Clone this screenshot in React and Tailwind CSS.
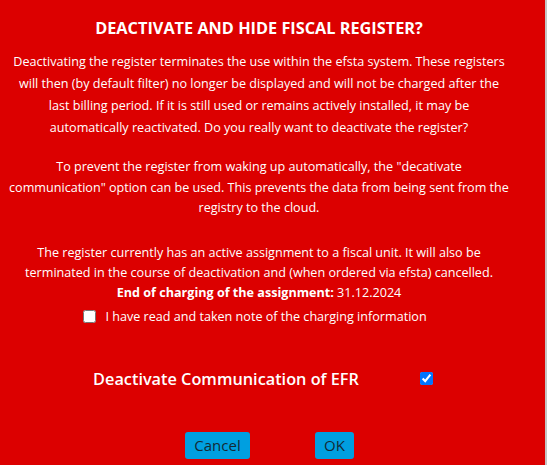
import { useState } from 'react';

const DeactivateDialog = () => {
  const [noted, setNoted] = useState(false);
  const [stopComm, setStopComm] = useState(true);

  return (
    <div className="flex h-[465px] w-[547px] overflow-hidden font-['Open_Sans',sans-serif]">
      <div className="flex-1 bg-[#dc0000] text-white">
        <div className="w-[518px] pt-[16px] text-center">
          <h2 className="text-[16.3px] font-bold leading-[24px]">DEACTIVATE AND HIDE FISCAL REGISTER?</h2>

          <p className="mt-[11px] whitespace-nowrap text-[12.6px] leading-[22px]">
            Deactivating the register terminates the use within the efsta system. These registers<br />
            will then (by default filter) no longer be displayed and will not be charged after the<br />
            last billing period. If it is still used or remains actively installed, it may be<br />
            automatically reactivated. Do you really want to deactivate the register?
          </p>

          <p className="mt-[18px] whitespace-nowrap text-[12.6px] leading-[20.5px]">
            To prevent the register from waking up automatically, the "decativate<br />
            communication" option can be used. This prevents the data from being sent from the<br />
            registry to the cloud.
          </p>

          <p className="mt-[24px] whitespace-nowrap text-[12.6px] leading-[20px]">
            The register currently has an active assignment to a fiscal unit. It will also be<br />
            terminated in the course of deactivation and (when ordered via efsta) cancelled.
          </p>
          <p className="whitespace-nowrap text-[12.6px] leading-[20px]">
            <span className="font-bold">End of charging of the assignment:</span> 31.12.2024
          </p>

          <label className="mt-[4px] flex items-center justify-center gap-[9px] pr-[8px] text-[12.6px] leading-[20px]">
            <input
              type="checkbox"
              checked={noted}
              onChange={(e) => setNoted(e.target.checked)}
              className="h-[13px] w-[13px]"
            />
            I have read and taken note of the charging information
          </label>

          <div className="mt-[40px] flex items-center justify-center gap-[61px] pl-[8px]">
            <span className="text-[16.3px] font-semibold leading-[24px]">Deactivate Communication of EFR</span>
            <input
              type="checkbox"
              checked={stopComm}
              onChange={(e) => setStopComm(e.target.checked)}
              className="h-[13px] w-[13px]"
            />
          </div>

          <div className="mt-[41px] flex justify-center gap-[65px] pl-[21px]">
            <button className="h-[27px] w-[65px] rounded-[3px] bg-[#009fe0] text-[15px] text-[#142a35]">Cancel</button>
            <button className="h-[27px] w-[39px] rounded-[3px] bg-[#009fe0] text-[15px] text-[#142a35]">OK</button>
          </div>
        </div>
      </div>
      <div className="w-[2px] bg-[#c4c4c4]" />
    </div>
  );
};

export default function App() {
  return <DeactivateDialog />;
}
